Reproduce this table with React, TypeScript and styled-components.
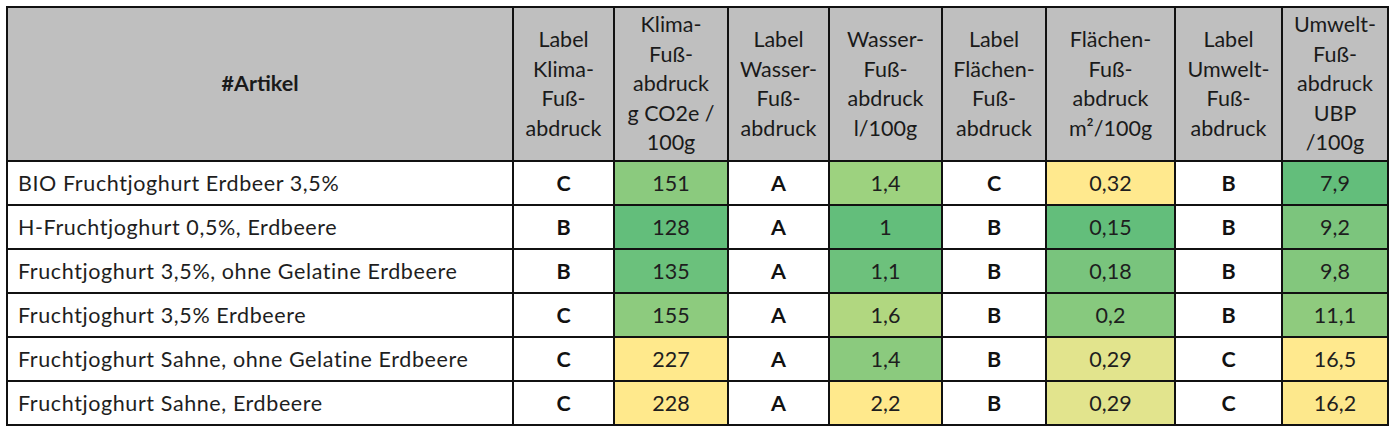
import React from "react";
import { styled, createGlobalStyle } from "styled-components";

const GlobalStyle = createGlobalStyle`
  html, body {
    margin: 0;
    padding: 0;
    background: #ffffff;
  }
  body {
    font-family: Lato, "Open Sans", sans-serif;
  }
`;

type Row = {
  name: string;
  klimaLabel: string;
  klima: string;
  klimaColor: string;
  wasserLabel: string;
  wasser: string;
  wasserColor: string;
  flaechenLabel: string;
  flaechen: string;
  flaechenColor: string;
  umweltLabel: string;
  umwelt: string;
  umweltColor: string;
};

const rows: Row[] = [
  { name: "BIO Fruchtjoghurt Erdbeer 3,5%", klimaLabel: "C", klima: "151", klimaColor: "#8bca7e", wasserLabel: "A", wasser: "1,4", wasserColor: "#9dd27f", flaechenLabel: "C", flaechen: "0,32", flaechenColor: "#ffe98e", umweltLabel: "B", umwelt: "7,9", umweltColor: "#63be7b" },
  { name: "H-Fruchtjoghurt 0,5%, Erdbeere", klimaLabel: "B", klima: "128", klimaColor: "#63be7b", wasserLabel: "A", wasser: "1", wasserColor: "#63be7b", flaechenLabel: "B", flaechen: "0,15", flaechenColor: "#63be7b", umweltLabel: "B", umwelt: "9,2", umweltColor: "#7cc57d" },
  { name: "Fruchtjoghurt 3,5%, ohne Gelatine Erdbeere", klimaLabel: "B", klima: "135", klimaColor: "#6bc17c", wasserLabel: "A", wasser: "1,1", wasserColor: "#6dc17c", flaechenLabel: "B", flaechen: "0,18", flaechenColor: "#79c47d", umweltLabel: "B", umwelt: "9,8", umweltColor: "#83c77d" },
  { name: "Fruchtjoghurt 3,5% Erdbeere", klimaLabel: "C", klima: "155", klimaColor: "#8dcb7e", wasserLabel: "A", wasser: "1,6", wasserColor: "#b1d780", flaechenLabel: "B", flaechen: "0,2", flaechenColor: "#87c97e", umweltLabel: "B", umwelt: "11,1", umweltColor: "#8fcb7e" },
  { name: "Fruchtjoghurt Sahne, ohne Gelatine Erdbeere", klimaLabel: "C", klima: "227", klimaColor: "#ffe98c", wasserLabel: "A", wasser: "1,4", wasserColor: "#8bca7e", flaechenLabel: "B", flaechen: "0,29", flaechenColor: "#e2e48d", umweltLabel: "C", umwelt: "16,5", umweltColor: "#ffe98e" },
  { name: "Fruchtjoghurt Sahne, Erdbeere", klimaLabel: "C", klima: "228", klimaColor: "#ffe98c", wasserLabel: "A", wasser: "2,2", wasserColor: "#ffe98c", flaechenLabel: "B", flaechen: "0,29", flaechenColor: "#e2e48d", umweltLabel: "C", umwelt: "16,2", umweltColor: "#fde88c" },
];

const colWidths = [506, 101, 114, 101, 113, 104, 129, 107, 106];

const headers: string[][] = [
  ["Label", "Klima-", "Fuß-", "abdruck"],
  ["Klima-", "Fuß-", "abdruck", "g CO2e /", "100g"],
  ["Label", "Wasser-", "Fuß-", "abdruck"],
  ["Wasser-", "Fuß-", "abdruck", "l/100g"],
  ["Label", "Flächen-", "Fuß-", "abdruck"],
  ["Flächen-", "Fuß-", "abdruck", "m²/100g"],
  ["Label", "Umwelt-", "Fuß-", "abdruck"],
  ["Umwelt-", "Fuß-", "abdruck", "UBP", "/100g"],
];

const App = () => {
  return (
    <>
      <GlobalStyle />
      <Page>
        <Table>
          <colgroup>
            {colWidths.map((w, i) => (
              <col key={i} style={{ width: w }} />
            ))}
          </colgroup>
          <thead>
            <tr>
              <HeadCell $bold>#Artikel</HeadCell>
              {headers.map((lines, i) => (
                <HeadCell key={i}>
                  {lines.map((l, j) => (
                    <HeadLine key={j}>{l}</HeadLine>
                  ))}
                </HeadCell>
              ))}
            </tr>
          </thead>
          <tbody>
            {rows.map((r) => (
              <tr key={r.name}>
                <NameCell>{r.name}</NameCell>
                <LabelCell>{r.klimaLabel}</LabelCell>
                <ValueCell $bg={r.klimaColor}>{r.klima}</ValueCell>
                <LabelCell>{r.wasserLabel}</LabelCell>
                <ValueCell $bg={r.wasserColor}>{r.wasser}</ValueCell>
                <LabelCell>{r.flaechenLabel}</LabelCell>
                <ValueCell $bg={r.flaechenColor}>{r.flaechen}</ValueCell>
                <LabelCell>{r.umweltLabel}</LabelCell>
                <ValueCell $bg={r.umweltColor}>{r.umwelt}</ValueCell>
              </tr>
            ))}
          </tbody>
        </Table>
      </Page>
    </>
  );
};

export default App;

const Page = styled.div`
  padding: 6px 0 0 6px;
`;

const Table = styled.table`
  border-collapse: collapse;
  table-layout: fixed;
  width: 1383px;
  font-size: 21.5px;
  color: #1e1e1e;

  td, th {
    border: 2px solid #111;
    padding: 0;
  }
  tbody tr {
    height: 44px;
  }
`;

const HeadCell = styled.th<{ $bold?: boolean }>`
  height: 152px;
  background: #bfbfbf;
  font-weight: ${(p) => (p.$bold ? 700 : 400)};
  color: #1a1a1a;
  text-align: center;
  vertical-align: middle;
  line-height: 29.5px;
`;

const HeadLine = styled.div`
  white-space: nowrap;
`;

const NameCell = styled.td`
  text-align: left;
  padding-left: 10px !important;
  white-space: nowrap;
  letter-spacing: 0.6px;
  background: #ffffff;
`;

const LabelCell = styled.td`
  text-align: center;
  font-weight: 700;
  color: #111;
  background: #ffffff;
`;

const ValueCell = styled.td<{ $bg: string }>`
  text-align: center;
  background: ${(p) => p.$bg};
`;
